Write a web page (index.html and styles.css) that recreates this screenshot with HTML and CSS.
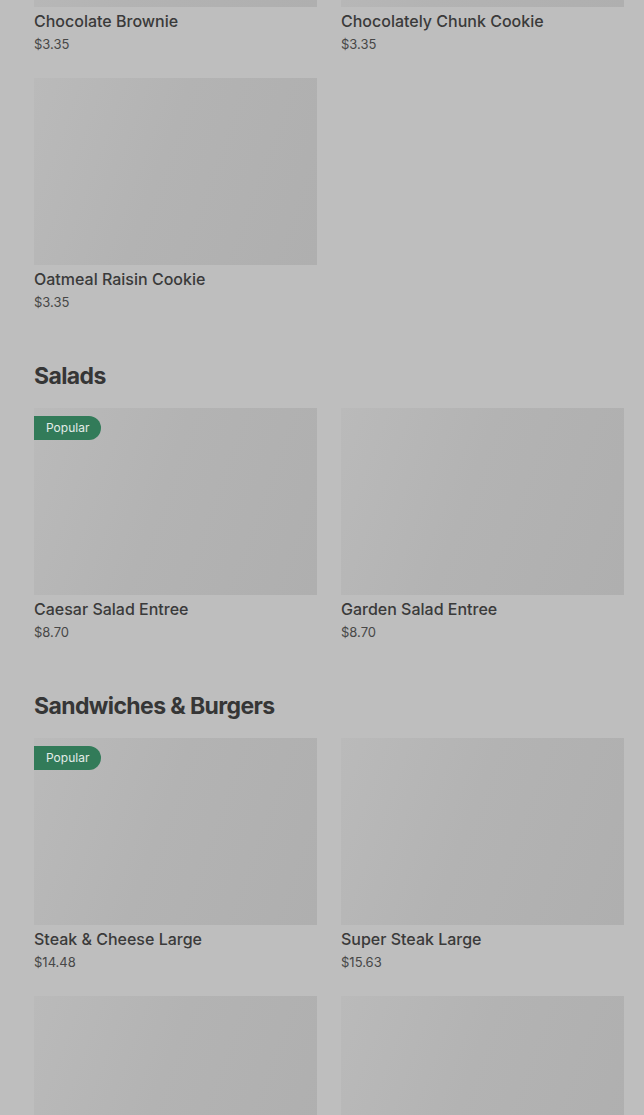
FILE: index.html
```html
<!DOCTYPE html>
<html>
<head>
  <meta charset="UTF-8">
  <title>Menu</title>
  <link rel="stylesheet" href="styles.css">
</head>
<body>

<div class="menu">

  <section class="category first">
    <div class="grid">
      <div class="item">
        <div class="photo"></div>
        <div class="name">Chocolate Brownie</div>
        <div class="price">$3.35</div>
      </div>
      <div class="item">
        <div class="photo"></div>
        <div class="name">Chocolately Chunk Cookie</div>
        <div class="price">$3.35</div>
      </div>
      <div class="item">
        <div class="photo"></div>
        <div class="name">Oatmeal Raisin Cookie</div>
        <div class="price">$3.35</div>
      </div>
    </div>
  </section>

  <section class="category">
    <h2>Salads</h2>
    <div class="grid">
      <div class="item">
        <div class="photo"><span class="badge">Popular</span></div>
        <div class="name">Caesar Salad Entree</div>
        <div class="price">$8.70</div>
      </div>
      <div class="item">
        <div class="photo"></div>
        <div class="name">Garden Salad Entree</div>
        <div class="price">$8.70</div>
      </div>
    </div>
  </section>

  <section class="category">
    <h2>Sandwiches &amp; Burgers</h2>
    <div class="grid">
      <div class="item">
        <div class="photo"><span class="badge">Popular</span></div>
        <div class="name">Steak &amp; Cheese Large</div>
        <div class="price">$14.48</div>
      </div>
      <div class="item">
        <div class="photo"></div>
        <div class="name">Super Steak Large</div>
        <div class="price">$15.63</div>
      </div>
      <div class="item">
        <div class="photo"></div>
      </div>
      <div class="item">
        <div class="photo"></div>
      </div>
    </div>
  </section>

</div>

</body>
</html>
```

FILE: styles.css
```css
html, body {
  margin: 0;
  padding: 0;
  height: 100%;
  overflow: hidden;
}
body {
  background-color: #bebebe;
  color: #3a3a3a;
  font-family: Inter, "Liberation Sans", sans-serif;
}
.menu {
  padding: 0 20px 0 34px;
  margin-top: -180px;
}
.category {
  margin-bottom: 51px;
}
.category h2 {
  margin: 0 0 19px 0;
  font-size: 23px;
  line-height: 26px;
  font-weight: 700;
  letter-spacing: -0.6px;
  color: #363636;
}
.grid {
  display: grid;
  grid-template-columns: 283px 283px;
  column-gap: 24px;
  row-gap: 24px;
}
.photo {
  position: relative;
  height: 187px;
  background: linear-gradient(110deg, #bababa 0%, #b3b3b3 45%, #afafaf 100%);
}
.badge {
  position: absolute;
  top: 8px;
  left: 0;
  height: 24px;
  line-height: 24px;
  padding: 0 12px;
  background-color: #327b59;
  color: #e4ece8;
  font-size: 12px;
  border-radius: 0 12px 12px 0;
}
.name {
  margin-top: 4px;
  font-size: 16px;
  line-height: 20px;
  font-weight: 500;
  color: #3a3a3a;
}
.price {
  margin-top: 3px;
  font-size: 13px;
  line-height: 20px;
  color: #474747;
}
```
